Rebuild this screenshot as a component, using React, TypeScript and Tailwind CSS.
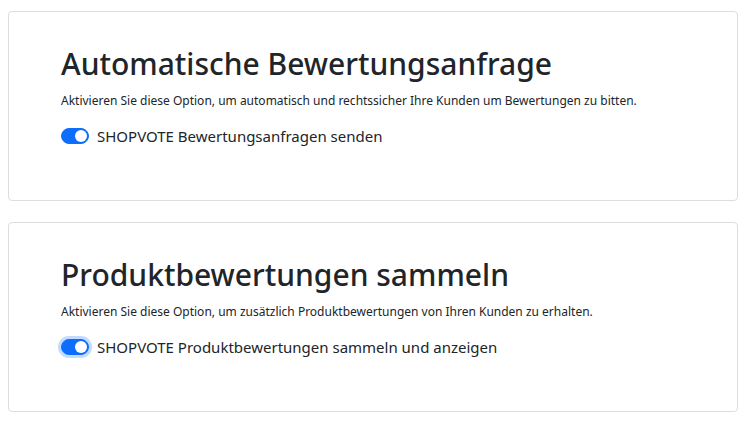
import { useState } from "react";

function Toggle({ checked, focused, onChange }: { checked: boolean; focused?: boolean; onChange: () => void }) {
  return (
    <button
      type="button"
      role="switch"
      aria-checked={checked}
      onClick={onChange}
      className={`relative inline-flex h-[16px] w-[28px] shrink-0 items-center rounded-full border ${
        checked ? "bg-[#0d6efd] border-[#0d6efd]" : "bg-white border-[#adb5bd]"
      } ${focused ? "ring-[3px] ring-[#0d6efd]/25" : ""}`}
    >
      <span
        className={`absolute h-[12px] w-[12px] rounded-full ${
          checked ? "left-[13px] bg-white" : "left-[1px] bg-[#adb5bd]"
        }`}
      />
    </button>
  );
}

function SettingCard({
  title,
  description,
  label,
  focused,
}: {
  title: string;
  description: string;
  label: string;
  focused?: boolean;
}) {
  const [on, setOn] = useState(true);
  return (
    <div className="h-[190px] rounded-[4px] border border-[#dddddd] bg-white pl-[52px] pt-[34px]">
      <h2 className="text-[30px] leading-[36px] font-medium text-[#212529]">{title}</h2>
      <p className="mt-[11px] text-[12px] leading-[16px] text-[#212529]">{description}</p>
      <label className="mt-[17px] flex items-center gap-[8px] text-[15px] leading-[20px] text-[#212529]">
        <Toggle checked={on} focused={focused} onChange={() => setOn(!on)} />
        <span>{label}</span>
      </label>
    </div>
  );
}

export default function App() {
  return (
    <div className="min-h-[427px] bg-white pl-[8px] pt-[11px] font-['Noto_Sans',sans-serif]">
      <div className="flex w-[730px] flex-col gap-[21px]">
        <SettingCard
          title="Automatische Bewertungsanfrage"
          description="Aktivieren Sie diese Option, um automatisch und rechtssicher Ihre Kunden um Bewertungen zu bitten."
          label="SHOPVOTE Bewertungsanfragen senden"
        />
        <SettingCard
          title="Produktbewertungen sammeln"
          description="Aktivieren Sie diese Option, um zusätzlich Produktbewertungen von Ihren Kunden zu erhalten."
          label="SHOPVOTE Produktbewertungen sammeln und anzeigen"
          focused
        />
      </div>
    </div>
  );
}
